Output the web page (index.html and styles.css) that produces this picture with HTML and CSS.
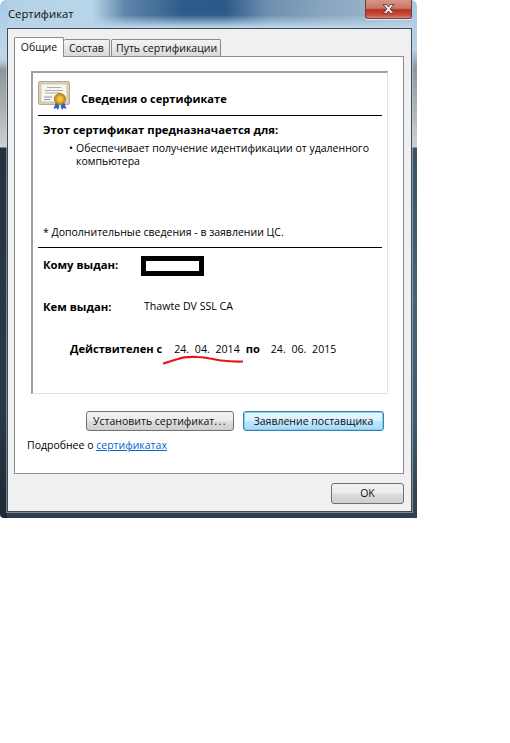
FILE: index.html
```
<!DOCTYPE html>
<html lang="ru">
<head>
<meta charset="utf-8">
<title>Сертификат</title>
<link rel="stylesheet" href="styles.css">
</head>
<body>
<div class="window">
  <div class="titlebar">
    <span class="title">Сертификат</span>
    <span class="close"><svg width="19" height="12" viewBox="0 0 19 12"><path d="M4 1.500h3.500l2 2.500 2-2.500h3.500l-3.800 4.500 3.800 4.500h-3.500l-2-2.500-2 2.500h-3.500l3.800-4.500z" fill="#f2ecec" stroke="#6d3a3c" stroke-width="1"/></svg></span>
  </div>
  <div class="client">
    <div class="tabs">
      <div class="tab active">Общие</div>
      <div class="tab t2">Состав</div>
      <div class="tab t3">Путь сертификации</div>
    </div>
    <div class="panel">
      <div class="cert">
        <div class="head">
          <svg class="cert-icon" width="34" height="30" viewBox="0 0 34 30">
            <rect x="0.500" y="0.500" width="31" height="23" rx="1.500" fill="#d9cdb8" stroke="#b9a88e"/>
            <rect x="3" y="3" width="26" height="18" fill="#f8f6f0" stroke="#d3c8b4"/>
            <path d="M9 6.500h14M7 9.500h18M7 12h15" stroke="#a9a9b4" stroke-width="1"/>
            <path d="M6 16h8M6 18.500h6" stroke="#8f97a8" stroke-width="1"/>
            <path d="M18 21l-2.500 7 3-1 1.500 2 1.500-4zM26 21l2.500 7-3-1-1.500 2-1.500-4z" fill="#2a63d6"/>
            <circle cx="22" cy="18" r="5.500" fill="#d59c1c" stroke="#a8750e"/>
            <circle cx="22" cy="18" r="3" fill="#eec14a"/>
          </svg>
          <span class="head-title">Сведения о сертификате</span>
        </div>
        <div class="rule"></div>
        <div class="purpose">
          <div class="bold">Этот сертификат предназначается для:</div>
          <div class="bullet"><span class="dot">•</span><span>Обеспечивает получение идентификации от удаленного компьютера</span></div>
        </div>
        <div class="note">* Дополнительные сведения - в заявлении ЦС.</div>
        <div class="rule"></div>
        <div class="row to">
          <span class="bold label">Кому выдан:</span>
          <span class="redact"></span>
        </div>
        <div class="row by">
          <span class="bold label">Кем выдан:</span>
          <span class="issuer">Thawte DV SSL CA</span>
        </div>
        <div class="valid">
          <span class="bold">Действителен с</span>
          <span class="date d1">24. 04. 2014</span>
          <span class="bold po">по</span>
          <span class="date d2">24. 06. 2015</span>
          <svg class="squiggle" width="84" height="12" viewBox="0 0 84 12"><path d="M1 10.500c5-1 9-3 15-4.500 5-2 13-2.500 20-2 9 0 14 2.500 23 3.500 8 1 14 1.500 22 1" fill="none" stroke="#e8141c" stroke-width="2.200"/></svg>
        </div>
      </div>
      <div class="actions">
        <button class="btn install">Установить сертификат<span class="dots">...</span></button>
        <button class="btn focus">Заявление поставщика</button>
      </div>
      <div class="more">Подробнее о <a href="#">сертификатах</a></div>
    </div>
    <div class="footer">
      <button class="btn ok">OK</button>
    </div>
  </div>
</div>
</body>
</html>
```
FILE: styles.css
```
html, body { margin: 0; padding: 0; background: #fff; }
body { width: 510px; height: 743px; overflow: hidden; font: 10.500px/13px "Open Sans", "Noto Sans", sans-serif; color: #000; }
.window {
  width: 417px; height: 518px; box-sizing: border-box; display: flex; flex-direction: column;
  padding: 0 5px 6px 7px;
  border-radius: 6px 6px 0 4px;
  background-color: #2f3f4e;
  background-image:
    linear-gradient(#a6cbe6 0, #bcd6ea 50px, #c0d4e2 60px, #8f969b 70px, #a5a9ac 100px, #cfd0d0 147px, #24323f 148px, #2b3a48 400px, #1f2c38 500px),
    linear-gradient(#a8c9e2 0, #b8d2e6 50px, #8e979d 68px, #b0b4b6 110px, #cfd0d0 147px, #3a5163 148px, #4a6173 300px, #3f596c 420px, #33434f 500px),
    linear-gradient(rgba(186, 214, 234, 0) 15px, #b9d4e8 27px),
    linear-gradient(90deg, #b4d0e4 0, #b8d6ea 22%, #5f86ab 30%, #2f5b8a 44%, #2d5a8a 54%, #6d8fae 64%, #8aa6bf 78%, #a5bfd4 100%);
  background-size: 7px 100%, 5px 100%, 100% 28px, 100% 28px;
  background-position: left top, right top, left top, left top;
  background-repeat: no-repeat;
}
.titlebar { height: 28px; flex: none; display: flex; justify-content: space-between; align-items: flex-start; }
.title { margin: 7px 0 0 1px; font-size: 11.300px; line-height: 14px; color: #111; }
.close { width: 45px; height: 18px; display: flex; align-items: center; justify-content: center; border: 1px solid #6b3f3f; border-top: 0; border-radius: 0 0 3px 3px; background: linear-gradient(#d99488 0, #c8776a 45%, #b8301e 55%, #c8523f 85%, #d58c7d 100%); box-shadow: 0 1px 0 #e5edf4; }
.client { flex: 1; min-height: 0; background: #f0f0f0; border: 1px solid #3c4a57; box-shadow: 0 0 0 1px rgba(205, 218, 228, 0.5); display: flex; flex-direction: column; padding: 8px 7px 0 6px; }
.tabs { display: flex; height: 19px; align-items: flex-end; position: relative; z-index: 2; }
.tab { box-sizing: border-box; border: 1px solid #898c95; border-bottom: 0; height: 17px; line-height: 16px; border-left-width: 0; background: linear-gradient(#f3f3f3, #e8e8e8 50%, #d8d8d8); border-radius: 2px 2px 0 0; color: #111; white-space: nowrap; }
.tab.active { width: 50px; height: 20px; line-height: 18px; background: #fff; border-left-width: 1px; text-align: center; margin-bottom: -1px; }
.t2 { width: 46px; padding-left: 5px; }
.t3 { width: 110px; margin-left: 1px; border-left-width: 1px; padding-left: 4px; }
.panel { box-sizing: border-box; height: 418px; flex: none; background: #fff; border: 1px solid #898c95; display: flex; flex-direction: column; padding: 14px 15px 0 16px; }
.cert { box-sizing: border-box; height: 323px; flex: none; border: 1px solid #e3e3e3; border-left: 2px solid #a0a0a0; border-top: 2px solid #a0a0a0; padding: 8px 5px 0 5px; display: flex; flex-direction: column; }
.head { display: flex; align-items: flex-start; height: 34px; flex: none; }
.cert-icon { display: block; }
.head-title { font-weight: 700; margin: 11px 0 0 9px; font-size: 11.100px; }
.rule { height: 1px; background: #000; flex: none; }
.bold { font-weight: 700; font-size: 11.300px; }
.purpose { margin: 7px 0 0 5px; height: 103px; flex: none; }
.bullet { display: flex; margin: 6px 12px 0 26px; line-height: 13px; }
.dot { width: 7px; flex: none; }
.note { margin-left: 5px; height: 21px; flex: none; }
.row { display: flex; margin-left: 5px; flex: none; }
.label { width: 98px; flex: none; }
.to { margin-top: 6px; align-items: center; height: 21px; }
.redact { width: 53px; height: 10px; border: 5px solid #000; background: #fff; flex: none; margin-top: 2px; }
.by { margin-top: 25px; }
.issuer { margin-left: 3px; font-size: 10.600px; }
.valid { margin: 29px 0 0 32px; display: flex; align-items: baseline; position: relative; flex: none; }
.valid .bold { font-size: 11.100px; }
.date { word-spacing: 3px; font-size: 10.600px; }
.d1 { margin-left: 12px; }
.po { margin-left: 6px; }
.d2 { margin-left: 11px; }
.squiggle { position: absolute; left: 92px; top: 11px; }
.actions { display: flex; margin: 17px 0 0 55px; gap: 9px; flex: none; }
.btn { font: inherit; color: #111; padding: 0; height: 20px; box-sizing: border-box; border: 1px solid #707070; border-radius: 3px; background: linear-gradient(#f2f2f2 0, #ebebeb 48%, #dddddd 52%, #cfcfcf 100%); }
.dots { letter-spacing: 1.500px; }
.install { width: 148px; }
.focus { width: 141px; border-color: #3c7fb1; background: linear-gradient(#eaf6fd 0, #d9f0fc 48%, #bee6fd 52%, #a7d9f5 100%); box-shadow: inset 0 0 0 1px #7fd0f5; }
.more { margin: 8px 0 0 -4px; line-height: 13px; flex: none; }
.more a { color: #0066cc; text-decoration: underline; }
.footer { display: flex; justify-content: flex-end; padding: 9px 0 0; }
.ok { width: 73px; height: 21px; }
```
